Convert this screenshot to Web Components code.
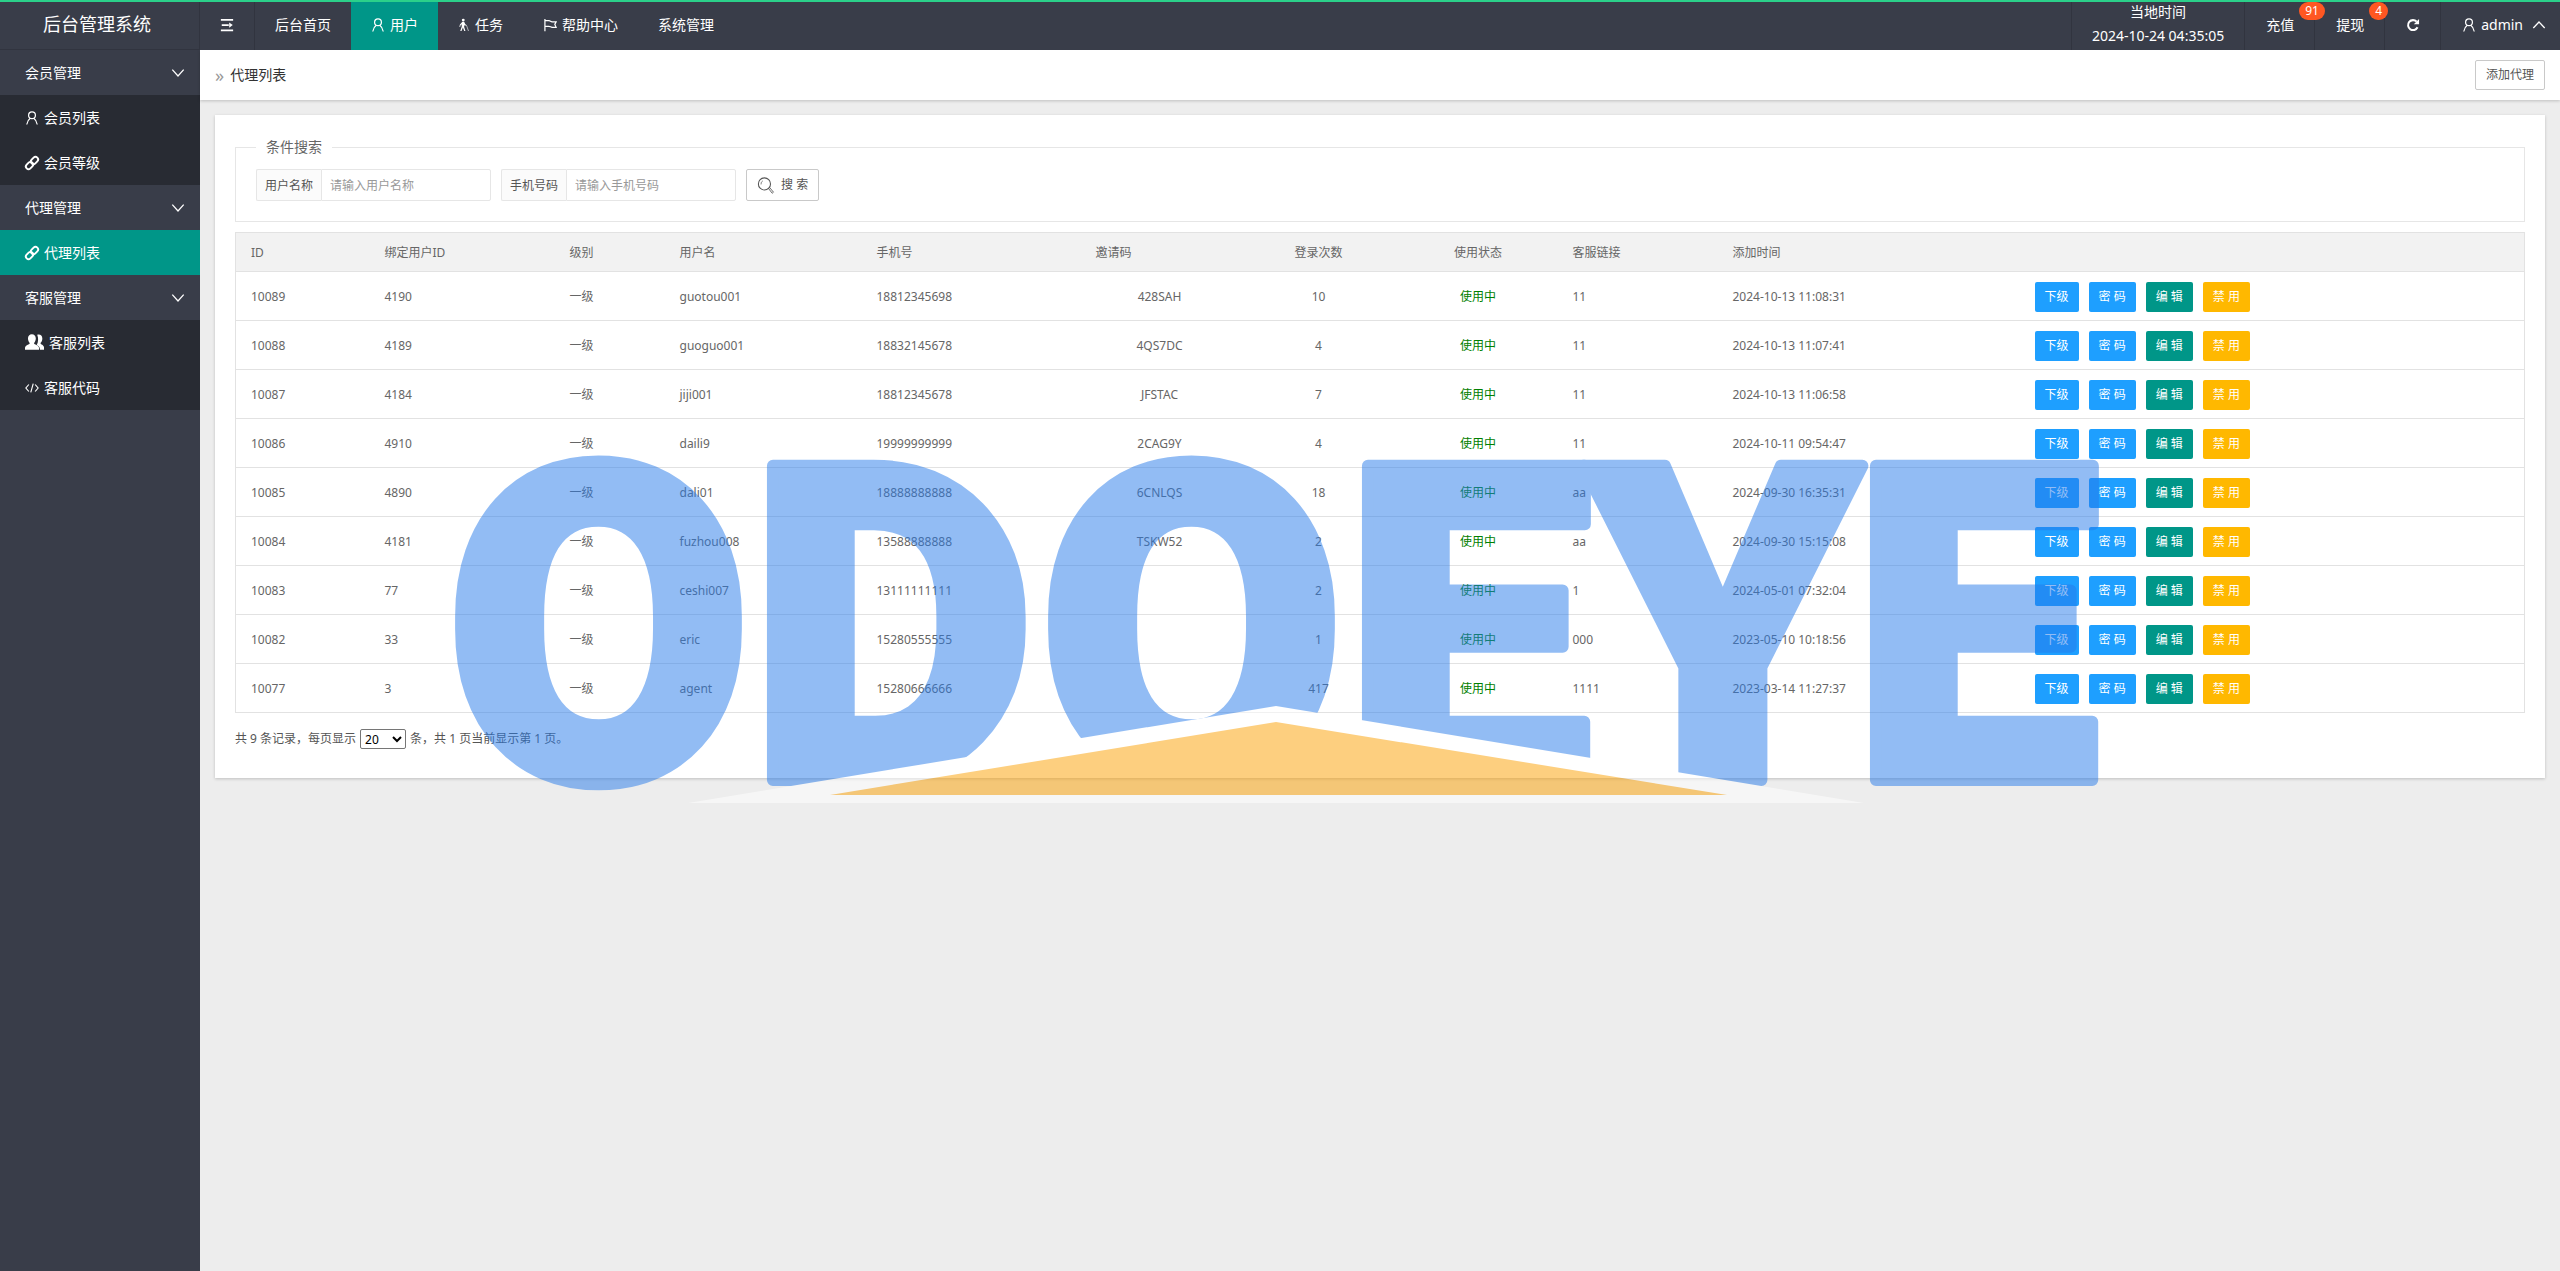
<!DOCTYPE html>
<html lang="zh-CN">
<head>
<meta charset="utf-8">
<title>后台管理系统</title>
<style>
  html, body { height: 100%; }
  body { margin: 0; background: #ededed; color: #666; font: 14px/24px "Noto Sans", "Noto Sans CJK SC", sans-serif; }
</style>
</head>
<body>
<admin-shell></admin-shell>

<script>
const ICONS = {
  menu: '<path d="M1 2h14M1 14h14M2 8h8" stroke-width="2"/><path d="M10.500 5L14.600 8l-4.100 3z" fill="currentColor" stroke="none"/>',
  user: '<circle cx="8" cy="4.800" r="3.900"/><path d="M6 8.200C4 9.600 2.600 11.600 2 15.400M10 8.200c2 1.400 3.400 3.400 4 7.200"/>',
  walk: '<g fill="currentColor" stroke="none"><circle cx="7" cy="1.400" r="1.900"/><path d="M5.800 3.700h2.400l1.600 3.300 2 1.300-.6 1L8.900 8l-.8 2.200 1.800 5.800H8.300L6.500 11.400 4.700 16H3l2-6-.1-3-1.400 1.300-.7 2.300-1-.3.8-3z"/></g><path d="M11.600 9.200l2.400 6.800" stroke-width=".8"/>',
  flag: '<path d="M2.200 1v14M2.200 3h4.600c1.600 0 2 1.300 3.600 1.300h4.600l-1.500 3 1.500 3.400h-4.600c-1.600 0-2-1.200-3.600-1.200H2.200"/>',
  link: '<g transform="rotate(-45 8 8)" stroke-width="2.200"><rect x="-.6" y="5" width="9.200" height="6" rx="3"/><rect x="7.400" y="5" width="9.200" height="6" rx="3"/></g>',
  code: '<path d="M4.400 4L1 8l3.400 4M11.600 4L15 8l-3.400 4M9.400 3L6.600 13" stroke-width="1.300"/>',
  down: '<path d="M1.500 4.200L8 11.400l6.500-7.200" stroke-width="1.500"/>',
  up: '<path d="M1.500 11.400L8 4.600l6.500 6.800" stroke-width="1.500"/>',
  refresh: '<path d="M13.200 10.600A5.700 5.700 0 1 1 12.200 4.200" stroke-width="2.300"/><path d="M14.900 1.200v6H8.900z" fill="currentColor" stroke="none"/>',
  search: '<circle cx="7" cy="6.500" r="5.700" stroke-width="1"/><path d="M3.800 7A3.300 3.300 0 0 1 5.500 3.600" stroke-width=".7"/><path d="M10.800 10.800l1.100-.9 3.600 4.400-1.200 1z" stroke-width=".8"/>',
  users: '<g fill="currentColor" stroke="none"><path d="M10.300 1.500c2.200-.8 4.300.5 4.300 3.100 0 1.700-.7 3-1.600 3.800 0 1.200 3 1.800 3 3.600v2h-3.400c0-2.600-1.500-3.300-2.700-4 1.300-2.200 1.600-5.600.4-8.500z"/><path d="M5.800 1c2 0 3.300 1.500 3.300 3.700 0 1.600-.7 3-1.500 3.800 0 1.600 4.200 1.700 4.200 4.100V14H0v-1.400c0-2.400 4-2.500 4-4.100-.8-.8-1.500-2.200-1.500-3.800C2.500 2.500 3.800 1 5.800 1z"/></g>'
};

function define(name, html, setup) {
  const template = document.createElement('template');
  template.innerHTML = html;
  customElements.define(name, class extends HTMLElement {
    constructor() {
      super();
      this.attachShadow({ mode: 'open' }).append(template.content.cloneNode(true));
    }
    connectedCallback() { if (setup) setup(this, this.shadowRoot); }
  });
}

/* icon glyph, sized by --size */
define('ui-icon', `
<style>
  :host { display: inline-flex; flex: none; width: var(--size, 14px); height: var(--size, 14px); }
  svg { width: 100%; height: 100%; overflow: visible; fill: none; stroke: currentColor; stroke-width: 1.4; }
</style>
<svg viewBox="0 0 16 16" aria-hidden="true"></svg>`,
(el, root) => { root.querySelector('svg').innerHTML = ICONS[el.getAttribute('name')] || ''; });

/* item of the top bar */
define('nav-item', `
<style>
  :host { display: flex; height: 50px; }
  a { display: flex; align-items: center; gap: 5px; padding: 0 20px; color: #fff; text-decoration: none; white-space: nowrap; position: relative; }
  :host([active]) a { background: #009688; }
  :host([ruled]) a { border-right: 1px solid #31343f; }
  :host([lead]) a { border-left: 1px solid #31343f; }
  :host([stacked]) a { flex-direction: column; gap: 0; }
  ::slotted([slot=badge]) { position: absolute; top: 2px; left: calc(100% - 15px); z-index: 1; padding: 0 6px;
    border-radius: 9px; background: #ff5722; font-size: 12px; line-height: 18px; }
</style>
<a href="#"><slot></slot><slot name="badge"></slot></a>`);

define('top-bar', `
<style>
  :host { display: flex; height: 50px; background: #393d49; position: relative; }
  :host::before { content: ""; position: absolute; inset: 0 0 auto; height: 2px; background: #2bd08a; z-index: 2; }
  h1 { box-sizing: border-box; width: 200px; height: 50px; margin: 0; padding-right: 5px; font-size: 18px; font-weight: 400; line-height: 48px; text-align: center;
    color: #fff; border-right: 1px solid #31343f; border-bottom: 1px solid #31343f; }
  nav { display: flex; }
  .right { margin-left: auto; gap: 1px; }
  .slim { --size: 12px; }
  .caret { margin-left: 4px; }
  .account { margin-right: -6px; }
</style>
<h1>后台管理系统</h1>
<nav aria-label="主菜单">
  <nav-item ruled><ui-icon name="menu"></ui-icon></nav-item>
  <nav-item>后台首页</nav-item>
  <nav-item active><ui-icon name="user"></ui-icon>用户</nav-item>
  <nav-item><ui-icon class="slim" name="walk"></ui-icon>任务</nav-item>
  <nav-item><ui-icon name="flag"></ui-icon>帮助中心</nav-item>
  <nav-item>系统管理</nav-item>
</nav>
<nav class="right" aria-label="账户">
  <nav-item stacked ruled lead><span>当地时间</span><span>2024-10-24 04:35:05</span></nav-item>
  <nav-item ruled>充值<span slot="badge">91</span></nav-item>
  <nav-item ruled>提现<span slot="badge">4</span></nav-item>
  <nav-item ruled><ui-icon name="refresh"></ui-icon></nav-item>
  <nav-item class="account"><ui-icon name="user"></ui-icon>admin<ui-icon class="caret" name="up"></ui-icon></nav-item>
</nav>`);

define('side-link', `
<style>
  :host { display: block; }
  a { display: flex; align-items: center; gap: 5px; height: 45px; padding: 0 25px; color: #fff; text-decoration: none; }
  :host([active]) a { background: #009688; }
</style>
<a href="#"><slot name="icon"></slot><slot></slot></a>`);

define('side-group', `
<style>
  :host { display: block; }
  button { display: flex; align-items: center; justify-content: space-between; width: 100%; height: 45px; padding: 0 15px 0 25px;
    border: 0; background: none; color: #fff; font: inherit; }
  div { background: #282b33; }
</style>
<button type="button" aria-expanded="true"><span></span><ui-icon name="down"></ui-icon></button>
<div><slot></slot></div>`,
(el, root) => { root.querySelector('span').textContent = el.getAttribute('label'); });

define('side-nav', `
<style>
  :host { display: block; width: 200px; flex: none; background: #393d49; }
  .wide { --size: 19px; }
</style>
<nav aria-label="侧边菜单">
  <side-group label="会员管理">
    <side-link><ui-icon slot="icon" name="user"></ui-icon>会员列表</side-link>
    <side-link><ui-icon slot="icon" name="link"></ui-icon>会员等级</side-link>
  </side-group>
  <side-group label="代理管理">
    <side-link active><ui-icon slot="icon" name="link"></ui-icon>代理列表</side-link>
  </side-group>
  <side-group label="客服管理">
    <side-link><ui-icon slot="icon" class="wide" name="users"></ui-icon>客服列表</side-link>
    <side-link><ui-icon slot="icon" name="code"></ui-icon>客服代码</side-link>
  </side-group>
</nav>`);

/* small button; tone picks the fill */
define('ui-button', `
<style>
  :host { display: inline-flex; }
  button { display: flex; align-items: center; gap: 7px; height: 30px; padding: 0 10px; border: 0; border-radius: 2px; background: #1e9fff;
    color: #fff; font: inherit; font-size: 12px; line-height: 30px; white-space: nowrap; }
  :host([tone=teal]) button { background: #009688; }
  :host([tone=amber]) button { background: #ffb800; }
  :host([tone=plain]) button { background: #fff; border: 1px solid #c9c9c9; color: #555; }
  :host([large]) button { height: 32px; --size: 17px; }
</style>
<button type="button"><slot></slot></button>`);

define('page-bar', `
<style>
  :host { display: flex; align-items: center; justify-content: space-between; height: 50px; padding: 0 15px; background: #fff;
    box-shadow: 0 1px 3px rgba(0,0,0,.2); }
  h2 { display: flex; gap: 6px; margin: 0; font-size: 14px; font-weight: 400; color: #333; }
  i { font-style: normal; color: #999; font-size: 18px; }
</style>
<h2><i aria-hidden="true">»</i>代理列表</h2>
<ui-button tone="plain">添加代理</ui-button>`);

define('search-field', `
<style>
  :host { display: flex; height: 32px; font-size: 12px; }
  label { box-sizing: border-box; padding: 0 8px; border: 1px solid #e6e6e6; border-right: 0; border-radius: 2px 0 0 2px; background: #fbfbfb; line-height: 32px; color: #555; }
  input { box-sizing: border-box; width: 170px; padding: 1px 8px 0; border: 1px solid #e6e6e6; border-radius: 0 2px 2px 0; font: inherit; color: #555; }
  input::placeholder { color: #999; }
</style>
<label for="q"></label><input id="q" type="text">`,
(el, root) => {
  root.querySelector('label').textContent = el.getAttribute('label');
  root.querySelector('input').placeholder = '请输入' + el.getAttribute('label');
});

define('search-panel', `
<style>
  :host { display: block; }
  fieldset { min-width: 0; margin: 0; padding: 10px 20px 20px; border: 1px solid #e6e6e6; }
  legend { padding: 0 10px; font-size: 14px; line-height: 24px; }
  form { display: flex; gap: 10px; }
</style>
<fieldset>
  <legend>条件搜索</legend>
  <form>
    <search-field label="用户名称"></search-field>
    <search-field label="手机号码"></search-field>
    <ui-button tone="plain" large><ui-icon name="search"></ui-icon>搜 索</ui-button>
  </form>
</fieldset>`);

const ROWS = [
  ['10089','4190','一级','guotou001','18812345698','428SAH','10','使用中','11','2024-10-13 11:08:31'],
  ['10088','4189','一级','guoguo001','18832145678','4QS7DC','4','使用中','11','2024-10-13 11:07:41'],
  ['10087','4184','一级','jiji001','18812345678','JFSTAC','7','使用中','11','2024-10-13 11:06:58'],
  ['10086','4910','一级','daili9','19999999999','2CAG9Y','4','使用中','11','2024-10-11 09:54:47'],
  ['10085','4890','一级','dali01','18888888888','6CNLQS','18','使用中','aa','2024-09-30 16:35:31'],
  ['10084','4181','一级','fuzhou008','13588888888','TSKW52','2','使用中','aa','2024-09-30 15:15:08'],
  ['10083','77','一级','ceshi007','13111111111','','2','使用中','1','2024-05-01 07:32:04'],
  ['10082','33','一级','eric','15280555555','','1','使用中','000','2023-05-10 10:18:56'],
  ['10077','3','一级','agent','15280666666','','417','使用中','1111','2023-03-14 11:27:37']
];

define('agent-table', `
<style>
  :host { display: block; }
  table { width: 100%; table-layout: fixed; border-collapse: collapse; border: 1px solid #e2e2e2; font-size: 12px; line-height: 20px; }
  th, td { box-sizing: border-box; padding: 2px 15px 0; text-align: left; font-weight: 400; border-bottom: 1px solid #e2e2e2; }
  th { height: 39px; background: #f2f2f2; }
  td { height: 49px; }
  td:nth-child(6), :is(th, td):nth-child(7), :is(th, td):nth-child(8) { text-align: center; }
  td:nth-child(8) { color: #008000; }
  .ops { display: flex; gap: 10px; }
</style>
<table>
  <colgroup>
    <col style="width:134px"><col style="width:185px"><col style="width:110px"><col style="width:197px"><col style="width:219px">
    <col style="width:158px"><col style="width:160px"><col style="width:159px"><col style="width:160px"><col style="width:302px"><col>
  </colgroup>
  <thead><tr><th>ID</th><th>绑定用户ID</th><th>级别</th><th>用户名</th><th>手机号</th><th>邀请码</th><th>登录次数</th><th>使用状态</th><th>客服链接</th><th>添加时间</th><th></th></tr></thead>
  <tbody></tbody>
</table>`,
(el, root) => {
  root.querySelector('tbody').innerHTML = ROWS.map(row => '<tr>' + row.map(v => `<td>${v}</td>`).join('') +
    `<td><div class="ops"><ui-button>下级</ui-button><ui-button>密 码</ui-button><ui-button tone="teal">编 辑</ui-button><ui-button tone="amber">禁 用</ui-button></div></td></tr>`).join('');
});

define('page-pager', `
<style>
  :host { display: flex; align-items: center; gap: 4px; font-size: 12px; color: #555; }
  select { width: 46px; height: 20px; padding: 0; border: 1px solid #767676; border-radius: 2px; background: #fff; color: #000; font: inherit; font-size: 12px; line-height: 16px; }
</style>
<label for="size">共 9 条记录，每页显示</label>
<select id="size"><option>20</option><option>40</option><option>60</option></select>
<span>条，共 1 页当前显示第 1 页。</span>`);

/* translucent brand mark laid over the whole window */
define('brand-mark', `
<style>
  :host { position: fixed; inset: 0; pointer-events: none; z-index: 5; }
  svg { width: 100%; height: 100%; display: block; }
  text { font: 900 442px Roboto, "Liberation Sans", sans-serif; fill: #277be9; stroke: #277be9; stroke-width: 12px; stroke-linejoin: round; }
</style>
<svg viewBox="0 0 2560 1271" role="img" aria-label="ODOEYE">
  <g opacity=".5">
    <text x="446 749 1039 1344 1584 1852" y="780">ODOEYE</text>
    <path d="M688 803L1276 706 1864 803z" fill="#fff"/>
    <path d="M830 795L1276 722 1727 795z" fill="#fb9f01"/>
  </g>
</svg>`);

define('admin-shell', `
<style>
  :host { display: flex; flex-direction: column; min-height: 100%; }
  .body { display: flex; flex: 1; }
  main { flex: 1; min-width: 0; }
  section { display: flex; flex-direction: column; gap: 10px; margin: 15px; padding: 20px 20px 27px; background: #fff; box-shadow: 0 1px 3px rgba(0,0,0,.2); }
  page-pager { margin-top: 4px; }
</style>
<top-bar></top-bar>
<div class="body">
  <side-nav></side-nav>
  <main>
    <page-bar></page-bar>
    <section>
      <search-panel></search-panel>
      <agent-table></agent-table>
      <page-pager></page-pager>
    </section>
  </main>
</div>
<brand-mark></brand-mark>`);
</script>
</body>
</html>
